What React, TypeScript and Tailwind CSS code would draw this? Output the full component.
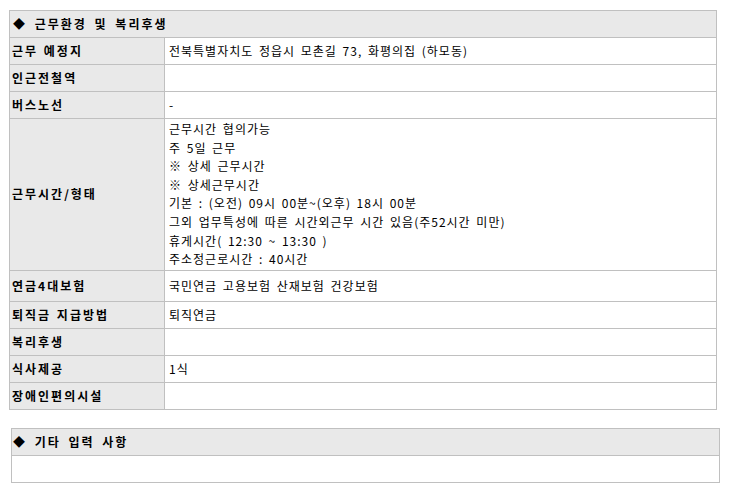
const rows: { label: string; value: string[]; tall?: boolean }[] = [
  { label: "근무 예정지", value: ["전북특별자치도 정읍시 모촌길 73, 화평의집 (하모동)"] },
  { label: "인근전철역", value: [] },
  { label: "버스노선", value: ["-"] },
  {
    label: "근무시간/형태",
    value: [
      "근무시간 협의가능",
      "주 5일 근무",
      "※ 상세 근무시간",
      "※ 상세근무시간",
      "기본 : (오전) 09시 00분~(오후) 18시 00분",
      "그외 업무특성에 따른 시간외근무 시간 있음(주52시간 미만)",
      "휴게시간( 12:30 ~ 13:30 )",
      "주소정근로시간 : 40시간",
    ],
  },
  { label: "연금4대보험", value: ["국민연금 고용보험 산재보험 건강보험"], tall: true },
  { label: "퇴직금 지급방법", value: ["퇴직연금"] },
  { label: "복리후생", value: [] },
  { label: "식사제공", value: ["1식"] },
  { label: "장애인편의시설", value: [] },
];

const font = { fontFamily: '"Noto Sans CJK KR", "Noto Sans", sans-serif' };

export default function App() {
  return (
    <div className="w-[731px] h-[495px] bg-white text-black" style={font}>
      <table className="ml-[9px] mt-[10px] w-[708px] border-collapse">
        <tbody>
          <tr>
            <td
              colSpan={2}
              className="h-[27px] border border-[#c0c0c0] bg-[#e9e9e9] pl-[3px] text-[12px] font-bold tracking-[2px] [word-spacing:3px] leading-none"
            >
              ◆ 근무환경 및 복리후생
            </td>
          </tr>
          {rows.map((row) => (
            <tr key={row.label}>
              <td
                className={
                  "w-[155px] border border-[#c0c0c0] bg-[#e9e9e9] pl-[2px] text-[12px] font-bold tracking-[2px] [word-spacing:1px] leading-none " +
                  (row.value.length > 1 ? "" : row.tall ? "h-[31px]" : "h-[27px]")
                }
              >
                {row.label}
              </td>
              <td
                className={
                  "border border-[#c0c0c0] pl-[4px] text-[12px] tracking-[1px] [word-spacing:2px] " +
                  (row.value.length > 1 ? "py-[1px] leading-[18.6px]" : "leading-none")
                }
              >
                {row.value.map((line) => (
                  <div key={line}>{line}</div>
                ))}
              </td>
            </tr>
          ))}
        </tbody>
      </table>

      <table className="ml-[11px] mt-[18px] w-[709px] border-collapse">
        <tbody>
          <tr>
            <td className="h-[27px] border border-[#c0c0c0] bg-[#e9e9e9] pl-[1px] text-[12px] font-bold tracking-[2px] [word-spacing:3px] leading-none">
              ◆ 기타 입력 사항
            </td>
          </tr>
          <tr>
            <td className="h-[27px] border border-[#c0c0c0]"></td>
          </tr>
        </tbody>
      </table>
    </div>
  );
}
